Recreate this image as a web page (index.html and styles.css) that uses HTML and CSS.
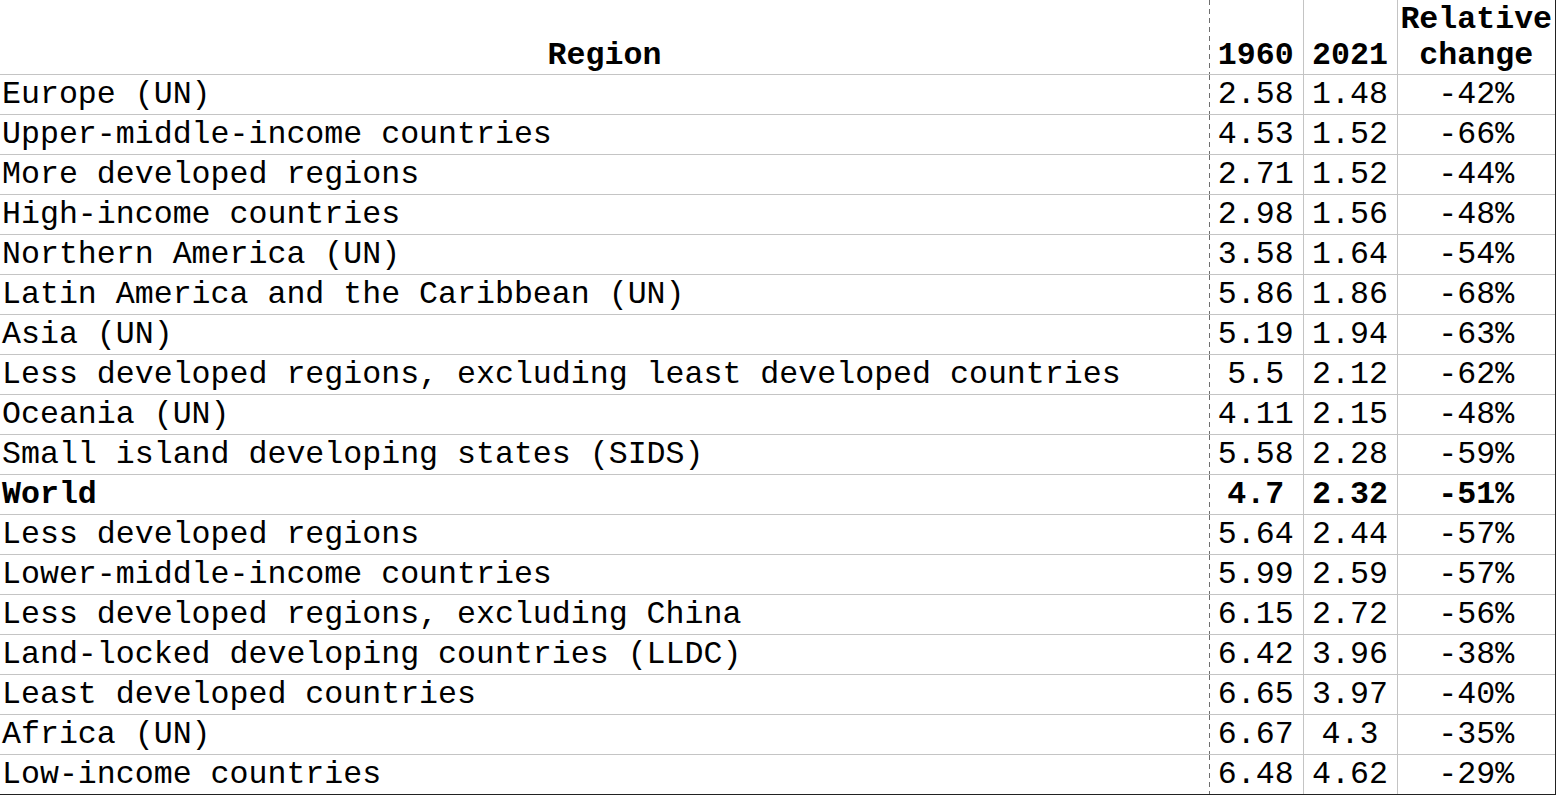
FILE: index.html
```html
<!DOCTYPE html>
<html>
<head>
<meta charset="utf-8">
<link rel="stylesheet" href="styles.css">
</head>
<body>
<div class="wrap">
<table class="data">
<colgroup>
<col class="c-region"><col class="c-num"><col class="c-num"><col class="c-rel">
</colgroup>
<thead>
<tr><th class="region">Region</th><th class="y1">1960</th><th>2021</th><th>Relative change</th></tr>
</thead>
<tbody>
<tr><td>Europe (UN)</td><td class="y1">2.58</td><td>1.48</td><td>-42%</td></tr>
<tr><td>Upper-middle-income countries</td><td class="y1">4.53</td><td>1.52</td><td>-66%</td></tr>
<tr><td>More developed regions</td><td class="y1">2.71</td><td>1.52</td><td>-44%</td></tr>
<tr><td>High-income countries</td><td class="y1">2.98</td><td>1.56</td><td>-48%</td></tr>
<tr><td>Northern America (UN)</td><td class="y1">3.58</td><td>1.64</td><td>-54%</td></tr>
<tr><td>Latin America and the Caribbean (UN)</td><td class="y1">5.86</td><td>1.86</td><td>-68%</td></tr>
<tr><td>Asia (UN)</td><td class="y1">5.19</td><td>1.94</td><td>-63%</td></tr>
<tr><td>Less developed regions, excluding least developed countries</td><td class="y1">5.5</td><td>2.12</td><td>-62%</td></tr>
<tr><td>Oceania (UN)</td><td class="y1">4.11</td><td>2.15</td><td>-48%</td></tr>
<tr><td>Small island developing states (SIDS)</td><td class="y1">5.58</td><td>2.28</td><td>-59%</td></tr>
<tr class="world"><td>World</td><td class="y1">4.7</td><td>2.32</td><td>-51%</td></tr>
<tr><td>Less developed regions</td><td class="y1">5.64</td><td>2.44</td><td>-57%</td></tr>
<tr><td>Lower-middle-income countries</td><td class="y1">5.99</td><td>2.59</td><td>-57%</td></tr>
<tr><td>Less developed regions, excluding China</td><td class="y1">6.15</td><td>2.72</td><td>-56%</td></tr>
<tr><td>Land-locked developing countries (LLDC)</td><td class="y1">6.42</td><td>3.96</td><td>-38%</td></tr>
<tr><td>Least developed countries</td><td class="y1">6.65</td><td>3.97</td><td>-40%</td></tr>
<tr><td>Africa (UN)</td><td class="y1">6.67</td><td>4.3</td><td>-35%</td></tr>
<tr class="last"><td>Low-income countries</td><td class="y1">6.48</td><td>4.62</td><td>-29%</td></tr>
</tbody>
</table>
</div>
</body>
</html>
```

FILE: styles.css
```css
html, body {
  margin: 0;
  padding: 0;
  background: #fff;
}

.wrap {
  width: 1555px;
  border-right: 1px solid #222;
  border-bottom: 1px solid #222;
}

.data {
  width: 1555px;
  table-layout: fixed;
  border-collapse: collapse;
  font-family: "Liberation Mono", "Courier New", monospace;
  font-size: 31.6px;
  color: #000;
}

.c-region { width: 1209px; }
.c-num { width: 94px; }
.c-rel { width: 158px; }

.data th,
.data td {
  padding: 0 2px;
  border-left: 1px solid #c4c4c4;
  border-bottom: 1px solid #c4c4c4;
  text-align: center;
  white-space: nowrap;
  line-height: 36px;
}

.data th:first-child,
.data td:first-child {
  border-left: none;
}

.data th {
  font-weight: bold;
  height: 72px;
  padding-top: 2px;
  padding-bottom: 0;
  vertical-align: bottom;
  white-space: normal;
}

.data td {
  padding-top: 2px;
  padding-bottom: 1px;
  vertical-align: middle;
}

.data td:first-child {
  text-align: left;
}

.data .y1 {
  border-left: none;
  background-image: repeating-linear-gradient(to bottom, #6e6e6e 0 5px, transparent 5px 9px);
  background-size: 1px 100%;
  background-repeat: no-repeat;
  background-position: left top;
}

.world td {
  font-weight: bold;
}

.last td {
  border-bottom: none;
}
```
